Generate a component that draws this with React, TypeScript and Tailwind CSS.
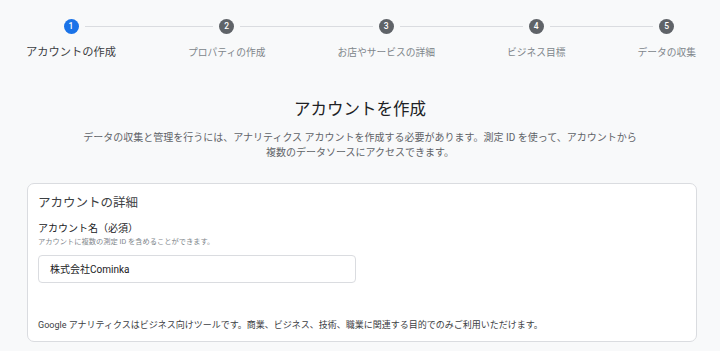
import React from 'react';

const steps = [
  { n: 1, label: 'アカウントの作成', active: true },
  { n: 2, label: 'プロパティの作成' },
  { n: 3, label: 'お店やサービスの詳細' },
  { n: 4, label: 'ビジネス目標' },
  { n: 5, label: 'データの収集' },
];

const Stepper: React.FC = () => (
  <div className="flex w-full items-start pl-[2px]">
    {steps.map((s, i) => (
      <React.Fragment key={s.n}>
        {i > 0 && (
          <div className="flex-1 mt-[18px] h-4 flex items-center">
            <div className="h-px w-full bg-[#dadce0]" />
          </div>
        )}
        <div className="flex flex-col items-center">
          <div className="mt-[18px] h-4 w-full flex items-center">
            <div className={i === 0 ? 'flex-1 h-px' : 'flex-1 h-px bg-[#dadce0]'} />
            <div
              className={
                'mx-[6px] w-[15px] h-[15px] rounded-full flex items-center justify-center text-white text-[8.5px] font-medium ' +
                (s.active ? 'bg-[#1a73e8]' : 'bg-[#5f6368]')
              }
            >
              {s.n}
            </div>
            <div className={i === steps.length - 1 ? 'flex-1 h-px' : 'flex-1 h-px bg-[#dadce0]'} />
          </div>
          <div
            className={
              'mt-[12px] px-6 leading-[14px] whitespace-nowrap ' +
              (s.active ? 'text-[11.25px] text-[#3c4043]' : 'text-[9.75px] text-[#80868b]')
            }
          >
            {s.label}
          </div>
        </div>
      </React.Fragment>
    ))}
  </div>
);

export default function App() {
  return (
    <div
      className="w-[720px] h-[351px] overflow-hidden bg-[#f8f9fa]"
      style={{ fontFamily: 'Roboto, "Noto Sans CJK JP", sans-serif' }}
    >
      <Stepper />

      <h1 className="mt-[38px] text-center text-[16.5px] leading-[24px] text-[#202124] font-normal">
        アカウントを作成
      </h1>
      <p className="mt-[8px] text-center text-[10px] leading-[15px] text-[#5f6368]">
        <span className="block whitespace-nowrap">
          データの収集と管理を行うには、アナリティクス アカウントを作成する必要があります。測定 ID を使って、アカウントから
        </span>
        <span className="block whitespace-nowrap">複数のデータソースにアクセスできます。</span>
      </p>

      {/* Account details card */}
      <div className="mt-[23px] ml-[27px] w-[670px] bg-white border border-[#dadce0] rounded-[7px] pl-[10px] pr-4 pt-[10px] pb-[9px]">
        <div className="text-[12.5px] leading-[18px] text-[#3c4043]">アカウントの詳細</div>
        <div className="mt-[10px] text-[10px] leading-[14px] text-[#202124] font-normal">アカウント名（必須）</div>
        <div className="mt-[1px] text-[7.25px] leading-[10px] text-[#80868b]">
          アカウントに複数の測定 ID を含めることができます。
        </div>
        <div className="mt-[8px] w-[318px] h-[28px] border border-[#dadce0] rounded-[4px] pl-[11px] flex items-center text-[10px] text-[#202124]">
          株式会社Cominka
        </div>
        <div className="mt-[35px] text-[9px] leading-[14px] text-[#3c4043]">
          Google アナリティクスはビジネス向けツールです。商業、ビジネス、技術、職業に関連する目的でのみご利用いただけます。
        </div>
      </div>
    </div>
  );
}
